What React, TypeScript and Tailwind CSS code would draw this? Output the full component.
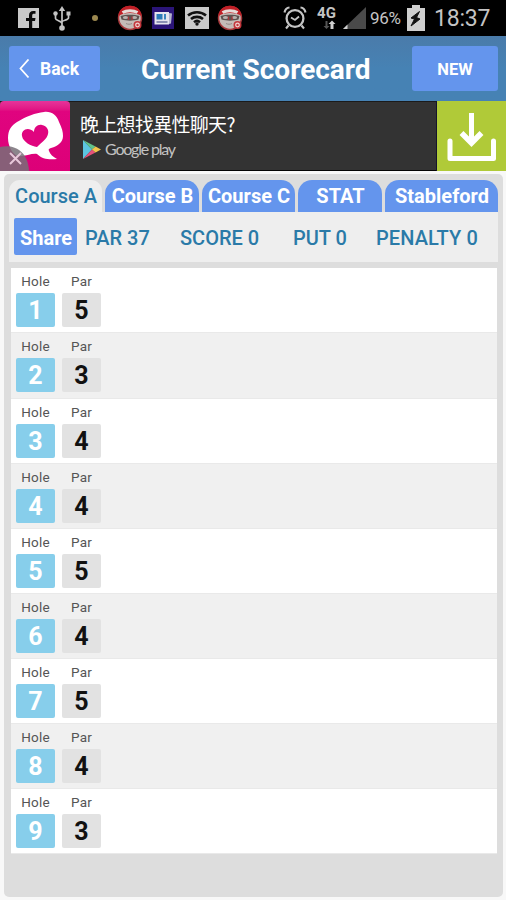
import type { ReactNode } from "react";

type Hole = { hole: number; par: number };

const HOLES: Hole[] = [
  { hole: 1, par: 5 },
  { hole: 2, par: 3 },
  { hole: 3, par: 4 },
  { hole: 4, par: 4 },
  { hole: 5, par: 5 },
  { hole: 6, par: 4 },
  { hole: 7, par: 5 },
  { hole: 8, par: 4 },
  { hole: 9, par: 3 },
];

const TABS = [
  { label: "Course A", className: "w-[93px] rounded-t-[11px] bg-[#eee] text-[#2a7aa8] font-medium" },
  { label: "Course B", className: "ml-[3px] w-[94px] rounded-t-[14px] bg-[#6495ed] text-white font-bold" },
  { label: "Course C", className: "ml-[3px] w-[93px] rounded-t-[14px] bg-[#6495ed] text-white font-bold" },
  { label: "STAT", className: "ml-[3px] w-[84px] rounded-t-[14px] bg-[#6495ed] text-white font-bold" },
  { label: "Stableford", className: "ml-[3px] w-[113px] rounded-t-[14px] bg-[#6495ed] text-white font-bold" },
];

function FaceIcon() {
  return (
    <svg width="26" height="26" viewBox="0 0 26 26">
      <circle cx="13" cy="13" r="11.5" fill="#c5bcb8" stroke="#a8383b" strokeWidth="1.500" />
      <path d="M1.500 11C2 4 7 .8 13 .8S24 4 24.500 11c-5-4-18-4-23 0Z" fill="#c01f26" />
      <path d="M5.500 7.500c4-2.500 11-2.500 15 0" stroke="#e6dcd8" strokeWidth="3" fill="none" />
      <path d="M3.500 11c5-1.800 14-1.800 19 0l-1 3.500c-5 1.500-12 1.500-17 0Z" fill="#5c5350" />
      <ellipse cx="8.500" cy="12.500" rx="2.600" ry="1.500" fill="#b8b0ad" />
      <ellipse cx="17.500" cy="12.500" rx="2.600" ry="1.500" fill="#b8b0ad" />
      <path d="M11.500 11.500v3.500M15 11.500v3.500" stroke="#a8383b" strokeWidth="1.300" />
      <path d="M9 18.500c2 1 4 1 6 0" stroke="#948b88" strokeWidth="1" fill="none" />
      <circle cx="20.500" cy="20" r="4" fill="#c3363c" />
      <circle cx="20.500" cy="20" r="1.800" fill="none" stroke="#f1d8d5" strokeWidth="1.200" />
    </svg>
  );
}

function StatusBar() {
  return (
    <div className="flex h-9 items-center bg-black text-[#c4c4c4]">
      <svg className="ml-[18px]" width="21" height="22" viewBox="0 0 21 22">
        <rect y="1" width="21" height="20" fill="#c9c9c9" />
        <path d="M11 21v-7H8v-3h3V8.500C11 5.500 12.500 4 15.300 4H17.500v2.800h-1.700c-1 0-1.600.6-1.600 1.700V11h3.300l-.5 3h-2.800V21Z" fill="#0b0b0b" />
      </svg>
      <svg className="ml-[14px]" width="18" height="26" viewBox="0 0 18 26">
        <g fill="none" stroke="#c4c4c4" strokeWidth="1.700">
          <path d="M9 4v18M2.500 9v4.500c0 2 6.500 2.500 6.500 5M15.500 9v4c0 2-6.500 2.500-6.500 4" />
        </g>
        <g fill="#c4c4c4">
          <path d="M9 1l3.200 5H5.800Z" />
          <rect x="13.500" y="6.500" width="4" height="4" />
          <circle cx="2.500" cy="8.500" r="2.200" />
          <circle cx="9" cy="23" r="2.800" />
        </g>
      </svg>
      <span className="ml-[21px] size-[6px] rounded-full bg-[#9c8850]" />
      <span className="ml-[19px]"><FaceIcon /></span>
      <svg className="ml-[9px]" width="22" height="22" viewBox="0 0 22 22">
        <rect width="22" height="22" fill="#2b1578" />
        <rect x="2.500" y="5" width="14.500" height="12.500" fill="#e6e6ee" />
        <path d="M17 6l3 .5-1 10-2 .5Z" fill="#b4b4cc" />
        <rect x="4.500" y="7" width="6" height="5.500" fill="#2b7cb8" />
        <path d="M13 7v5.500" stroke="#2b7cb8" strokeWidth="1.800" />
        <path d="M4.500 15h11" stroke="#5a6494" strokeWidth="1.300" />
      </svg>
      <svg className="ml-[11px]" width="24" height="22" viewBox="0 0 24 22">
        <rect width="24" height="22" fill="#c9c9c9" />
        <g fill="none" stroke="#111" strokeWidth="2.600">
          <path d="M3 8.500c5-4.300 13-4.300 18 0" />
          <path d="M6 12c3.300-2.800 8.700-2.800 12 0" />
          <path d="M9 15.200c1.700-1.400 4.300-1.400 6 0" />
        </g>
        <circle cx="12" cy="17" r="1.700" fill="#111" />
      </svg>
      <span className="ml-[8px]"><FaceIcon /></span>
      <svg className="ml-[40px]" width="24" height="24" viewBox="0 0 24 24" fill="none" stroke="#c4c4c4">
        <circle cx="12" cy="12.500" r="8.400" strokeWidth="2.300" />
        <path d="M8 11.500l4 2.500 4-3.500" strokeWidth="1.800" />
        <path d="M1.500 6.500c.5-3 2.500-4.800 5-5M22.500 6.500c-.5-3-2.500-4.800-5-5" strokeWidth="2.100" />
        <path d="M5.500 19.500l-2.500 3M18.500 19.500l2.500 3" strokeWidth="2.100" />
      </svg>
      <div className="ml-[9px] flex w-[21px] flex-col items-center">
        <span className="text-[15px] leading-[13px] font-bold">4G</span>
        <svg className="ml-1" width="14" height="10" viewBox="0 0 14 10">
          <path d="M3.500 1v5H1.500l3 3 3-3h-2V1Z" fill="#555" />
          <path d="M8.500 9V4H6.500L10 .5 13.500 4h-2v5Z" fill="#d0d0d0" />
        </svg>
      </div>
      <svg className="ml-[5px]" width="24" height="24" viewBox="0 0 24 24">
        <path d="M24 1v22H1Z" fill="#4a4a4a" />
        <path d="M5.500 18.500V23H1Z" fill="#d0d0d0" />
      </svg>
      <span className="ml-[4px] w-[33px] pt-[2px] text-[17px] tracking-[-0.300px] whitespace-nowrap">96%</span>
      <svg className="ml-[4px]" width="18" height="28" viewBox="0 0 18 28">
        <path d="M5 1h8v3h5v23H0V4h5Z" fill="#cfcfcf" />
        <path d="M12.500 7.500L4 14l3.500 1L4 22l9-7-3.500-1.500Z" fill="#111" stroke="#111" />
      </svg>
      <span className="ml-[9px] pt-px text-[23px] leading-9 tracking-[-0.200px] whitespace-nowrap">18:37</span>
    </div>
  );
}

function HeaderButton({ className, children }: { className: string; children: ReactNode }) {
  return (
    <button className={`flex h-[45px] items-center rounded-[3px] bg-[#6495ed] font-bold text-white ${className}`}>
      {children}
    </button>
  );
}

function Header() {
  return (
    <header className="flex h-[65px] items-start bg-linear-to-b from-[#4a7baa] to-[#4682b4] to-50% pt-[10px]">
      <HeaderButton className="ml-[9px] w-[91px] pt-px pl-[10px] text-[17.500px]">
        <svg width="11" height="20" viewBox="0 0 11 20" fill="none" stroke="#fff" strokeWidth="1.800">
          <path d="M9.500 .5L1.500 9.500l8 9" />
        </svg>
        <span className="ml-[10px]">Back</span>
      </HeaderButton>
      <h1 className="ml-[40px] w-[232px] pl-px text-[28px] leading-[47px] font-bold whitespace-nowrap text-white">
        Current Scorecard
      </h1>
      <HeaderButton className="ml-[40px] w-[86px] justify-center pt-[3px] text-[16.500px]">NEW</HeaderButton>
    </header>
  );
}

function AdBanner() {
  return (
    <div className="flex h-[70px] bg-[#333] shadow-[inset_0_-1px_0_#050505,inset_0_1px_0_#1b1b1b]">
      <div className="relative h-[70px] w-[70px] overflow-hidden rounded-t-[4px] bg-linear-to-b from-[#e6339a] via-[#e0047f] via-15% to-[#dd0078]">
        <svg width="70" height="70" viewBox="0 0 70 70">
          <path
            d="M17 21C27 15 35 12 44 11c7-1 13 3 15 10 3 6 4 10 4 14 0 6-5 10-12 12-2 1-3 1-2 3 1 3 4 6 8 8-8 1-15 0-20-5-5-1-13 3-20 2C13 53 8 46 8 37c0-8 3-12 9-16Z"
            fill="#fff"
          />
          <path
            d="M37 46c-6-1-14-5-15-11-1-6 6-10 12-4 0-5 4-8 8-7 5 1 7 5 6 9-1 5-6 8-11 13Z"
            fill="#e0047f"
          />
        </svg>
        <svg className="absolute bottom-0 left-0" width="29" height="25" viewBox="0 0 29 25">
          <path d="M0 1C14-2 28 5 29 25H0Z" fill="#787078" fillOpacity=".85" />
          <path d="M10 7l11 11M21 7L10 18" stroke="#e8c8da" strokeWidth="2" />
        </svg>
      </div>
      <div className="flex flex-1 flex-col pl-[10px]">
        <span className="mt-[9px] text-[19px] leading-[28px] tracking-[-0.700px] text-white font-['Noto_Sans_CJK_TC',sans-serif]">
          晚上想找異性聊天?
        </span>
        <div className="mt-px flex h-[20px] items-center">
          <svg className="ml-[3px]" width="18" height="19" viewBox="0 0 18 19">
            <path d="M0 0v19l9-9.500Z" fill="#5cc5e0" />
            <path d="M0 0l12.500 6.500L9 9.500Z" fill="#62c48b" />
            <path d="M0 19l12.500-6.500L9 9.500Z" fill="#e5527a" />
            <path d="M12.500 6.500L18 9.500l-5.500 3L9 9.500Z" fill="#f3c44c" />
          </svg>
          <span className="ml-[4px] text-[16px] tracking-[-1.200px] text-[#c2c2c2] font-['Lato',sans-serif]">Google play</span>
        </div>
      </div>
      <div className="h-[70px] w-[70px] border-l border-[#14142c] bg-[#b0ca38]">
        <svg width="69" height="70" viewBox="0 0 69 70" fill="none" stroke="#fff">
          <path d="M34.500 12v29" strokeWidth="5" />
          <path d="M24.500 32l10 10 10-10" strokeWidth="5.500" />
          <path d="M13 40v17.500h43.500V40" strokeWidth="5" strokeLinejoin="round" strokeLinecap="round" />
        </svg>
      </div>
    </div>
  );
}

function HoleRow({ hole, par }: Hole) {
  return (
    <li className="flex h-[65.140px] gap-[7px] border-b border-[#e9e9e9] bg-white pt-[6px] pl-[5px] even:bg-[#f0f0f0]">
      <div className="w-[39px] text-center">
        <div className="text-[13.500px] leading-[14px] tracking-[0.200px] text-[#555]">Hole</div>
        <div className="mt-[5px] h-[34px] rounded-[2px] bg-[#87ceeb] text-[25px] leading-[36px] font-bold text-white">{hole}</div>
      </div>
      <div className="w-[39px] text-center">
        <div className="text-[13.500px] leading-[14px] tracking-[0.200px] text-[#555]">Par</div>
        <div className="mt-[5px] h-[34px] rounded-[2px] bg-[#e2e2e2] text-[25px] leading-[36px] font-bold text-[#111]">{par}</div>
      </div>
    </li>
  );
}

export default function App() {
  return (
    <div className="flex h-[900px] w-[506px] flex-col overflow-hidden bg-[#f8f8f8] font-['Roboto',sans-serif]">
      <StatusBar />
      <Header />
      <AdBanner />
      <main className="mt-[3px] ml-1 h-[723px] w-[499px] rounded-[5px] bg-[#ddd] pt-[6px] pl-[5px]">
        <nav className="flex">
          {TABS.map((tab) => (
            <div
              key={tab.label}
              className={`flex h-8 items-center justify-center pl-px text-[20px] leading-8 whitespace-nowrap ${tab.className}`}
            >
              {tab.label}
            </div>
          ))}
        </nav>
        <section className="flex h-[50px] w-[489px] items-start bg-[#eee] pt-[6px] pl-[5px] text-[20px] leading-[41px] font-medium whitespace-nowrap text-[#2a7aa8]">
          <button className="h-[37px] w-[63px] rounded-[2px] bg-[#6495ed] pl-px leading-[41px] font-bold text-white">Share</button>
          <span className="ml-[8px] w-[95px]">PAR 37</span>
          <span className="w-[113px]">SCORE 0</span>
          <span className="w-[83px]">PUT 0</span>
          <span className="tracking-[0.100px]">PENALTY 0</span>
        </section>
        <ul className="mt-[6.300px] ml-[2px] w-[486px]">
          {HOLES.map((h) => (
            <HoleRow key={h.hole} {...h} />
          ))}
        </ul>
      </main>
    </div>
  );
}
